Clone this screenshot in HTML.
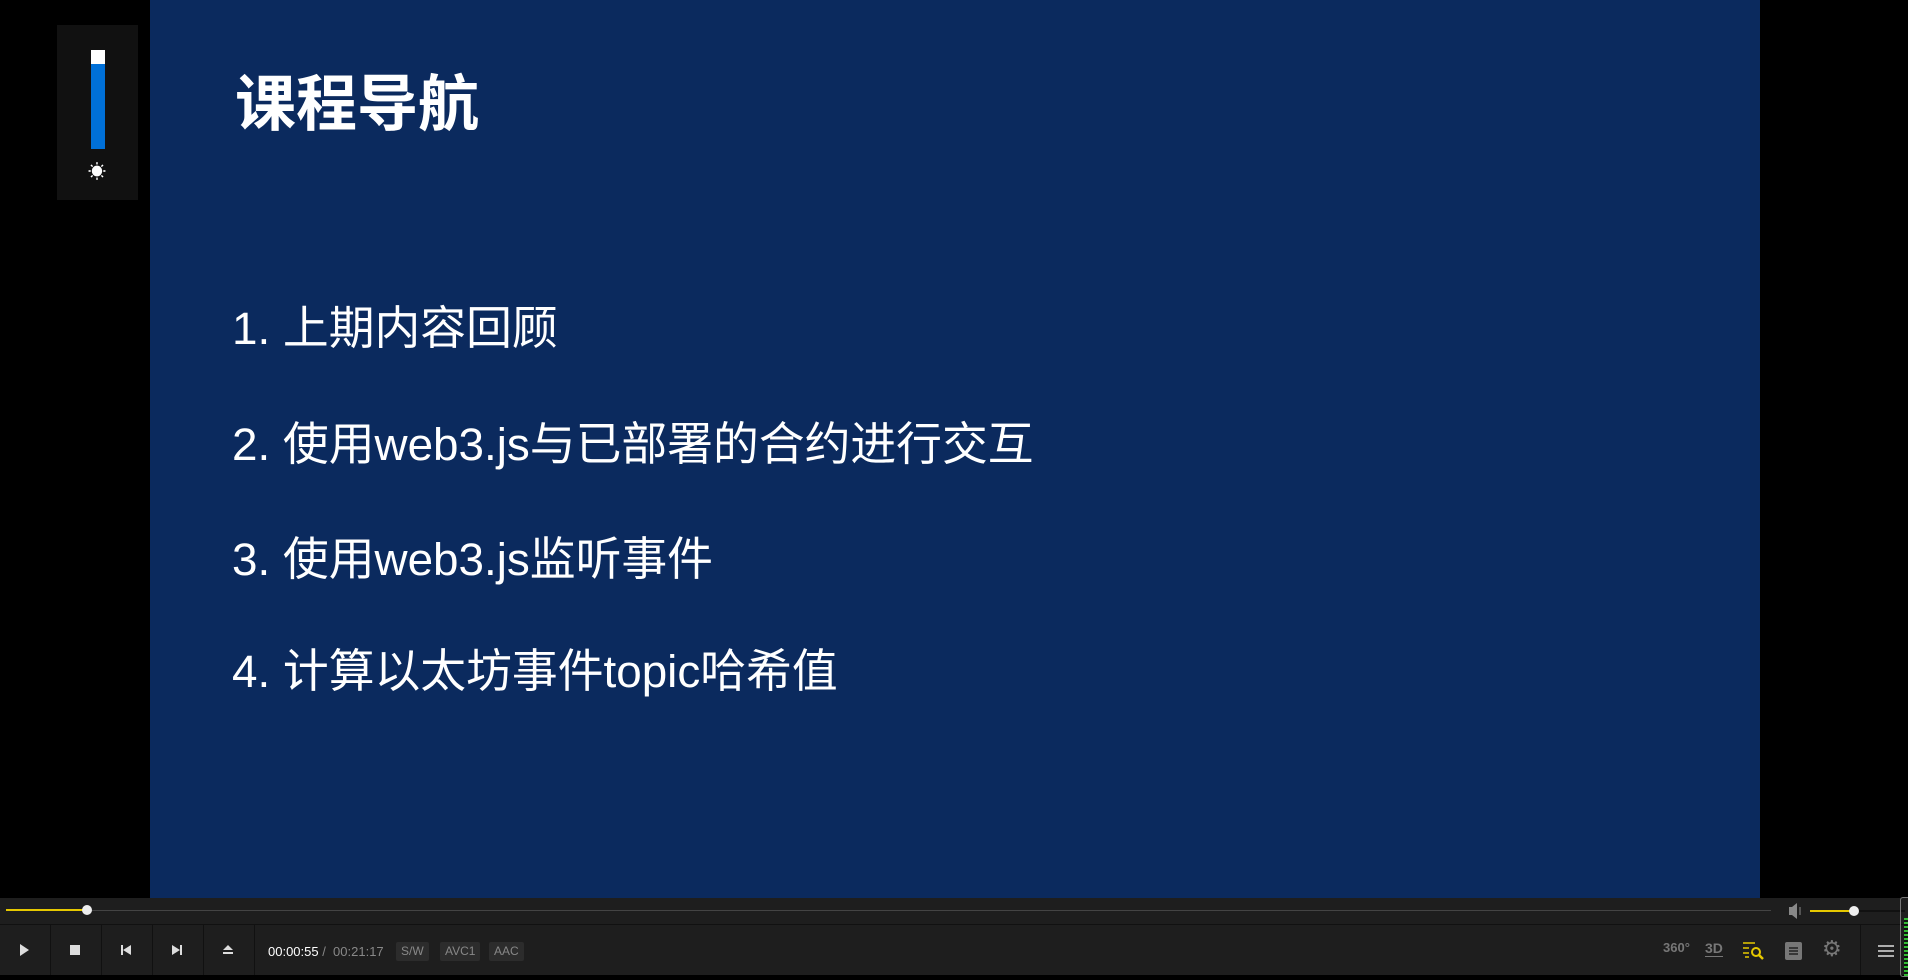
<!DOCTYPE html><html><head><meta charset="utf-8"><style>
body{margin:0;width:1908px;height:975px;background:#000;overflow:hidden;position:relative;font-family:"Liberation Sans","Noto Sans CJK SC",sans-serif}
.slide{position:absolute;left:150px;top:0;width:1610px;height:898px;background:#0b2a5e}
.t{position:absolute;left:235px;top:64px;color:#fff;font-size:61px;font-weight:bold;line-height:80px}
.i{position:absolute;left:232px;color:#fff;font-size:45.8px;line-height:56px}
.bar{position:absolute;left:0;top:898px;width:1908px;height:77px;background:#1e1e1e}
.ab{position:absolute}
.btn{position:absolute;top:925px;height:50px;width:50px;border-right:1px solid #111}
.tag{position:absolute;top:942px;height:19px;line-height:19px;background:#2c2c2c;color:#888;font-size:12px;padding:0 5px;border-radius:2px}
</style></head><body>
<div class="slide"></div>
<div class="t">课程导航</div>
<div class="i" style="top:301px">1. 上期内容回顾</div>
<div class="i" style="top:417px">2. 使用web3.js与已部署的合约进行交互</div>
<div class="i" style="top:532px">3. 使用web3.js监听事件</div>
<div class="i" style="top:644px">4. 计算以太坊事件topic哈希值</div>
<div class="ab" style="left:57px;top:25px;width:81px;height:175px;background:#111"></div>
<div class="ab" style="left:91px;top:50px;width:14px;height:14px;background:#fff"></div>
<div class="ab" style="left:91px;top:64px;width:14px;height:85px;background:#0070d8"></div>
<div class="ab" style="left:88px;top:158px;color:#fff;font-size:18px">☀</div>
<div class="bar"></div>
<div class="ab" style="left:0;top:924px;width:1908px;height:1px;background:#111"></div>
<div class="ab" style="left:6px;top:910px;width:1765px;height:1px;background:#444"></div>
<div class="ab" style="left:6px;top:909px;width:80px;height:2px;background:#e6c800"></div>
<div class="ab" style="left:82px;top:905px;width:10px;height:10px;border-radius:50%;background:#eee"></div>
<div class="btn" style="left:0"><svg width="50" height="50"><path d="M20 19v12l9-6z" fill="#ddd"/></svg></div>
<div class="btn" style="left:51px"><svg width="50" height="50"><rect x="19" y="20" width="10" height="10" fill="#ddd"/></svg></div>
<div class="btn" style="left:102px"><svg width="50" height="50"><path d="M19 20h2v10h-2zM21 25l8-5v10z" fill="#ddd"/></svg></div>
<div class="btn" style="left:153px"><svg width="50" height="50"><path d="M27 20h2v10h-2zM27 25l-8-5v10z" fill="#ddd"/></svg></div>
<div class="btn" style="left:204px"><svg width="50" height="50"><path d="M19 25l5-5 5 5zM19 27h10v2h-10z" fill="#ddd"/></svg></div>
<div class="ab" style="left:268px;top:944px;font-size:13px;color:#fff">00:00:55 <span style="color:#888"> / &nbsp;00:21:17</span></div>
<div class="tag" style="left:396px">S/W</div>
<div class="tag" style="left:440px">AVC1</div>
<div class="tag" style="left:489px">AAC</div>
<svg class="ab" style="left:1785px;top:901px" width="123" height="20"><path d="M4 6h3l5-4v16l-5-4h-3z" fill="#888"/><path d="M15 6v8" stroke="#888"/><rect x="25" y="9" width="45" height="2" fill="#e6c800"/><rect x="70" y="9" width="50" height="2" fill="#111"/><circle cx="69" cy="10" r="5" fill="#eee"/></svg>
<div class="ab" style="left:1900px;top:897px;width:8px;height:78px;border:1px solid #777;border-right:none;border-radius:3px 0 0 3px;background:repeating-linear-gradient(#3b3 0 2px,#111 2px 4px) 3px 20px/5px 60px no-repeat"></div>
<div class="ab" style="left:1860px;top:925px;width:1px;height:50px;background:#111"></div>
<div class="ab" style="left:1663px;top:940px;color:#777;font-size:13px;font-weight:bold">360°</div>
<div class="ab" style="left:1705px;top:940px;color:#777;font-size:14px;font-weight:bold;border-bottom:1px solid #777">3D</div>
<svg class="ab" style="left:1742px;top:941px" width="24" height="20"><path d="M1 2h12M1 7h6M1 12h6M3 16h4" stroke="#e6c800" stroke-width="1.5"/><circle cx="14" cy="11" r="4" stroke="#e6c800" stroke-width="2" fill="none"/><path d="M17 14l4 4" stroke="#e6c800" stroke-width="2.5"/></svg>
<svg class="ab" style="left:1785px;top:942px" width="17" height="18"><rect width="17" height="18" rx="2" fill="#777"/><path d="M4 6h9M4 9h9M4 12h9" stroke="#222" stroke-width="1.5"/></svg>
<div class="ab" style="left:1822px;top:936px;color:#777;font-size:22px">⚙</div>
<svg class="ab" style="left:1878px;top:944px" width="17" height="14"><path d="M0 2h16M0 7h16M0 12h16" stroke="#ddd" stroke-width="1.5"/></svg>
</body></html>
